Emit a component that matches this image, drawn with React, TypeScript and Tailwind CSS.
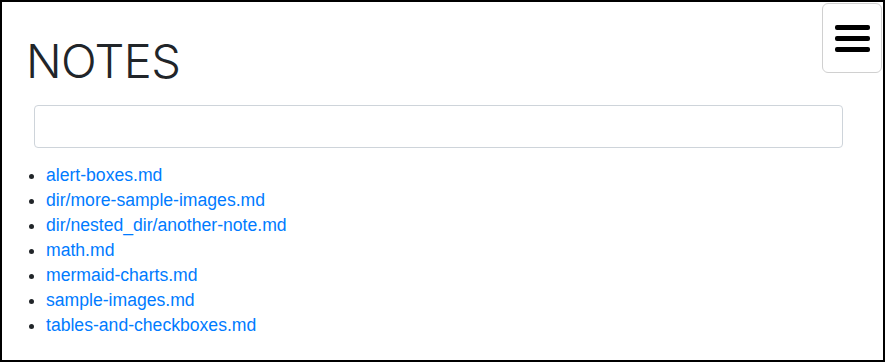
import React from 'react';

const notes = [
  'alert-boxes.md',
  'dir/more-sample-images.md',
  'dir/nested_dir/another-note.md',
  'math.md',
  'mermaid-charts.md',
  'sample-images.md',
  'tables-and-checkboxes.md',
];

const App: React.FC = () => {
  return (
    <div className="relative w-[885px] h-[362px] border-2 border-black bg-white font-['Liberation_Sans',Arial,sans-serif] text-[#212529] overflow-hidden">
      {/* menu toggle */}
      <button className="absolute top-[1px] right-[1px] w-[60px] h-[70px] bg-white border border-[#d0d0d0] rounded-[6px] flex flex-col items-center justify-center gap-[6px]">
        <span className="block w-[35px] h-[5px] bg-black rounded-[2px]" />
        <span className="block w-[35px] h-[5px] bg-black rounded-[2px]" />
        <span className="block w-[35px] h-[5px] bg-black rounded-[2px]" />
      </button>

      <div className="pt-[30px]">
        <h1 className="ml-[24px] font-['Inter',sans-serif] text-[47px] leading-[57.6px] font-[320] tracking-[-0.6px]">NOTES</h1>
        <input
          type="text"
          className="block mt-[15px] ml-[32px] w-[809px] h-[43px] border border-[#ced4da] rounded-[4px] px-3 outline-none"
        />
        <ul className="mt-[15px] pl-[44px] list-disc text-[17.6px] leading-[25px]">
          {notes.map((n) => (
            <li key={n}>
              <a href="#" className="text-[#007bff]">{n}</a>
            </li>
          ))}
        </ul>
      </div>
    </div>
  );
};

export default App;
